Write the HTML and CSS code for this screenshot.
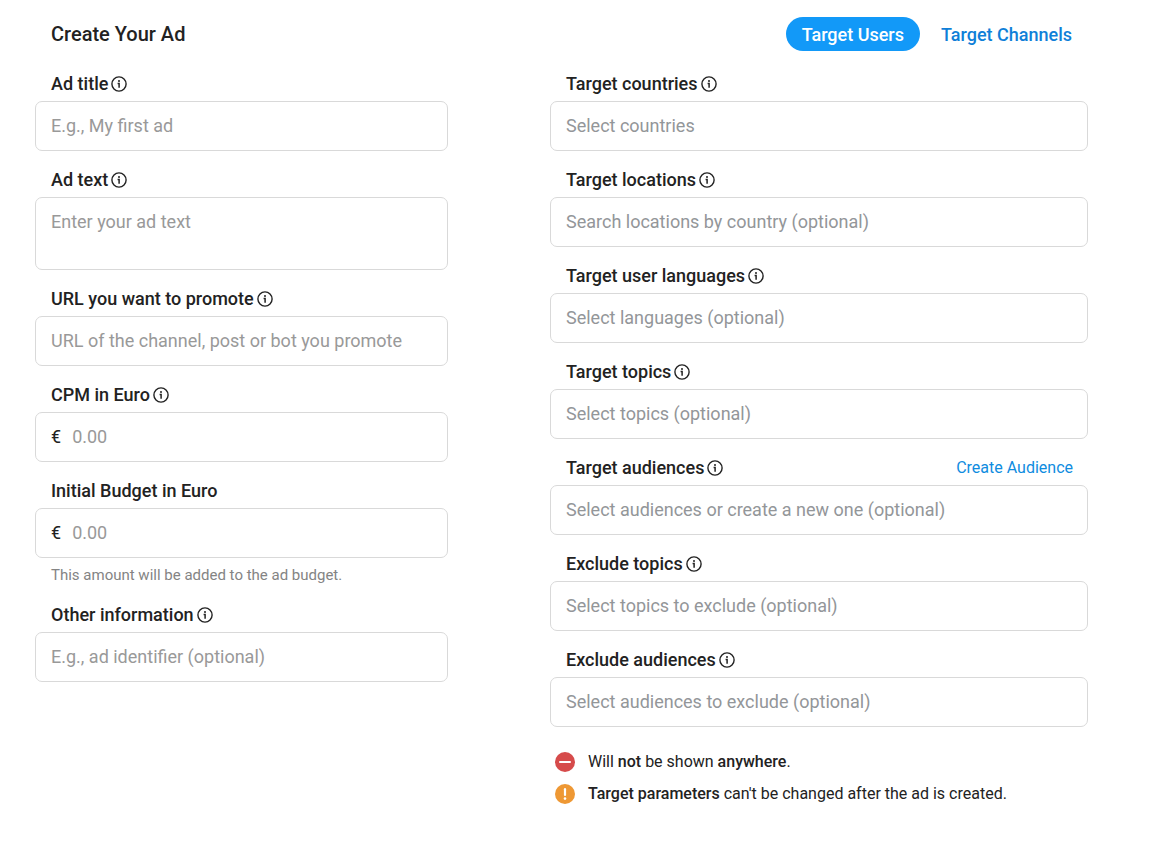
FILE: index.html
```html
<!DOCTYPE html>
<html lang="en">
<head>
    <meta charset="UTF-8">
    <meta name="viewport" content="width=device-width, initial-scale=1">
    <title>Create Your Ad</title>
    <link rel="stylesheet" href="styles.css">
</head>
<body>
<!-- Info icon shared by the labels -->
<svg class="sprite" aria-hidden="true">
    <symbol id="info" viewBox="0 0 16 16">
        <circle cx="8" cy="8" r="7.1" fill="none" stroke="currentColor" stroke-width="1.4"/>
        <circle cx="8" cy="4.9" r="1" fill="currentColor"/>
        <path d="M6.6 7.4H8.1V11.8" fill="none" stroke="currentColor" stroke-width="1.5"/>
    </symbol>
</svg>

<form class="ad-form">
    <header class="form-header">
        <h1>Create Your Ad</h1>
        <nav class="tabs">
            <a class="tab active" href="#users">Target Users</a>
            <a class="tab" href="#channels">Target Channels</a>
        </nav>
    </header>

    <div class="columns">
        <div class="column">
            <div class="field">
                <div class="field-label">
                    <label for="title">Ad title</label>
                    <svg class="info"><use href="#info"/></svg>
                </div>
                <input class="control" type="text" id="title" placeholder="E.g., My first ad">
            </div>
            <div class="field">
                <div class="field-label">
                    <label for="text">Ad text</label>
                    <svg class="info"><use href="#info"/></svg>
                </div>
                <textarea class="control" id="text" rows="2" placeholder="Enter your ad text"></textarea>
            </div>
            <div class="field">
                <div class="field-label">
                    <label for="url">URL you want to promote</label>
                    <svg class="info"><use href="#info"/></svg>
                </div>
                <input class="control" type="text" id="url" placeholder="URL of the channel, post or bot you promote">
            </div>
            <div class="field">
                <div class="field-label">
                    <label for="cpm">CPM in Euro</label>
                    <svg class="info"><use href="#info"/></svg>
                </div>
                <div class="control amount">
                    <span>€</span>
                    <input type="text" id="cpm" inputmode="decimal" placeholder="0.00">
                </div>
            </div>
            <div class="field">
                <div class="field-label">
                    <label for="budget">Initial Budget in Euro</label>
                </div>
                <div class="control amount">
                    <span>€</span>
                    <input type="text" id="budget" inputmode="decimal" placeholder="0.00">
                </div>
                <p class="hint">This amount will be added to the ad budget.</p>
            </div>
            <div class="field">
                <div class="field-label">
                    <label for="other">Other information</label>
                    <svg class="info"><use href="#info"/></svg>
                </div>
                <input class="control" type="text" id="other" placeholder="E.g., ad identifier (optional)">
            </div>
        </div>

        <div class="column">
            <div class="field">
                <div class="field-label">
                    <label for="countries">Target countries</label>
                    <svg class="info"><use href="#info"/></svg>
                </div>
                <input class="control select" type="text" id="countries" placeholder="Select countries">
            </div>
            <div class="field">
                <div class="field-label">
                    <label for="locations">Target locations</label>
                    <svg class="info"><use href="#info"/></svg>
                </div>
                <input class="control select" type="text" id="locations" placeholder="Search locations by country (optional)">
            </div>
            <div class="field">
                <div class="field-label">
                    <label for="languages">Target user languages</label>
                    <svg class="info"><use href="#info"/></svg>
                </div>
                <input class="control select" type="text" id="languages" placeholder="Select languages (optional)">
            </div>
            <div class="field">
                <div class="field-label">
                    <label for="topics">Target topics</label>
                    <svg class="info"><use href="#info"/></svg>
                </div>
                <input class="control select" type="text" id="topics" placeholder="Select topics (optional)">
            </div>
            <div class="field">
                <div class="field-label">
                    <label for="audiences">Target audiences</label>
                    <svg class="info"><use href="#info"/></svg>
                    <a class="create-link" href="#audience">Create Audience</a>
                </div>
                <input class="control select" type="text" id="audiences" placeholder="Select audiences or create a new one (optional)">
            </div>
            <div class="field">
                <div class="field-label">
                    <label for="ex-topics">Exclude topics</label>
                    <svg class="info"><use href="#info"/></svg>
                </div>
                <input class="control select" type="text" id="ex-topics" placeholder="Select topics to exclude (optional)">
            </div>
            <div class="field">
                <div class="field-label">
                    <label for="ex-audiences">Exclude audiences</label>
                    <svg class="info"><use href="#info"/></svg>
                </div>
                <input class="control select" type="text" id="ex-audiences" placeholder="Select audiences to exclude (optional)">
            </div>

            <ul class="notes">
                <li>
                    <svg class="note-icon" viewBox="0 0 20 20">
                        <circle cx="10" cy="10" r="10" fill="#d64b4b"/>
                        <path d="M5 10H15" stroke="#fff" stroke-width="2" stroke-linecap="round"/>
                    </svg>
                    <span>Will <b>not</b> be shown <b>anywhere</b>.</span>
                </li>
                <li>
                    <svg class="note-icon" viewBox="0 0 20 20">
                        <circle cx="10" cy="10" r="10" fill="#ee9834"/>
                        <path d="M10 5.2V11" stroke="#fff" stroke-width="2.2" stroke-linecap="round"/>
                        <circle cx="10" cy="14.6" r="1.3" fill="#fff"/>
                    </svg>
                    <span><b>Target parameters</b> can't be changed after the ad is created.</span>
                </li>
            </ul>
        </div>
    </div>
</form>
</body>
</html>
```
FILE: styles.css
```css
* {
    box-sizing: border-box;
}

body {
    margin: 0;
    background-color: #fff;
    color: #222;
    font-family: Roboto, sans-serif;
    font-size: 18px;
    line-height: 24px;
}

.sprite {
    display: none;
}

a {
    color: #0f8ce0;
    text-decoration: none;
}

.ad-form {
    padding: 17px 68px 32px 35px;
}

/* Header */
.form-header {
    display: flex;
    align-items: center;
    justify-content: space-between;
    padding-left: 16px;
    margin-bottom: 21px;
}

h1 {
    margin: 0;
    font-size: 20px;
    font-weight: 500;
}

.tabs {
    display: flex;
    gap: 5px;
}

.tab {
    padding: 6px 16px 4px;
    border-radius: 17px;
    color: #0f7fd8;
    font-weight: 500;
}

.tab.active {
    background-color: #1299f8;
    color: #fff;
}

/* Form columns */
.columns {
    display: grid;
    grid-template-columns: 413fr 538fr;
    gap: 102px;
    align-items: start;
}

.column {
    display: flex;
    flex-direction: column;
    gap: 17px;
}

.field-label {
    display: flex;
    align-items: center;
    gap: 3px;
    padding: 0 15px 0 16px;
    margin-bottom: 5px;
    font-weight: 500;
}

.info {
    width: 16px;
    height: 16px;
}

.create-link {
    margin-left: auto;
    font-size: 16px;
    font-weight: 400;
}

.control {
    display: block;
    width: 100%;
    padding: 12px 15px;
    border: 1px solid #d9d9d9;
    border-radius: 7px;
    background-color: #fff;
    color: #222;
    font: inherit;
}

textarea.control {
    height: 73px;
    resize: none;
}

.control::placeholder,
.amount input::placeholder {
    color: #999;
    opacity: 1;
}

.select::placeholder {
    color: #939699;
}

.amount {
    display: flex;
    gap: 11px;
}

.amount input {
    flex: 1;
    min-width: 0;
    padding: 0;
    border: 0;
    outline: 0;
    font: inherit;
}

.hint {
    margin: 7px 16px 1px;
    color: #848484;
    font-size: 15px;
    line-height: 20px;
}

/* Notes under the target fields */
.notes {
    display: flex;
    flex-direction: column;
    gap: 8px;
    margin: 6px 0 0;
    padding: 0 5px;
    list-style: none;
    font-size: 16px;
}

.notes li {
    display: flex;
    align-items: center;
    gap: 13px;
}

.notes b {
    font-weight: 500;
}

.note-icon {
    width: 20px;
    height: 20px;
}
```
